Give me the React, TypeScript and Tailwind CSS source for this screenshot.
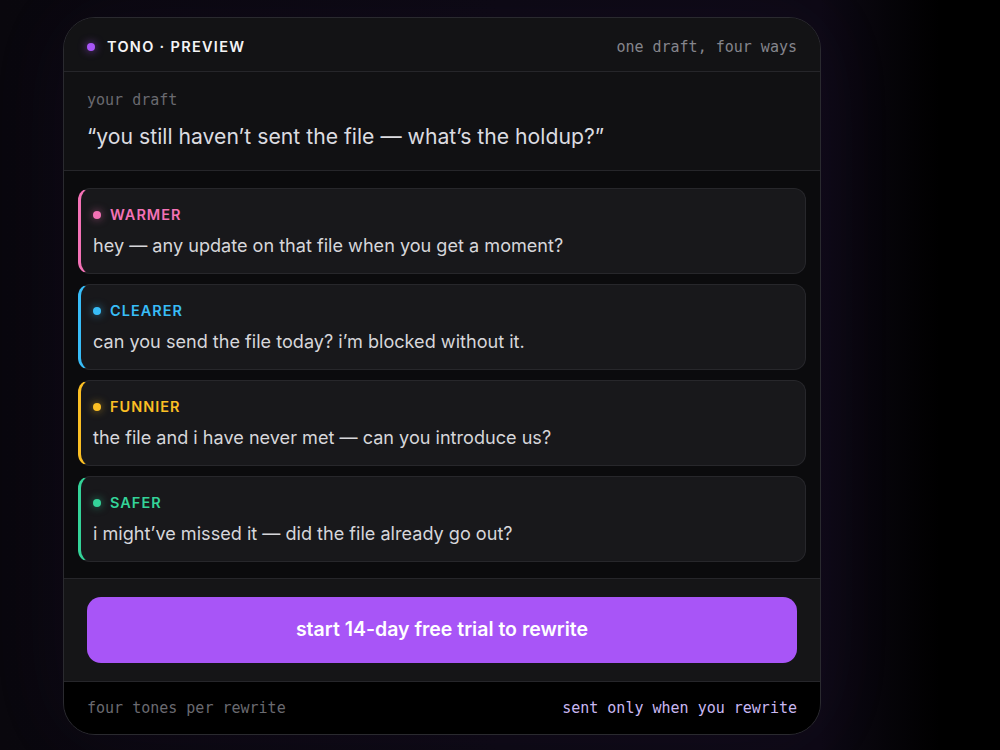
const tones = [
	{ name: 'WARMER', text: 'hey — any update on that file when you get a moment?', bar: 'border-l-[#f472b6]', label: 'text-[#f472b6]', dot: 'bg-[#f472b6] shadow-[0_0_8px_rgba(244,114,182,0.6)]' },
	{ name: 'CLEARER', text: 'can you send the file today? i’m blocked without it.', bar: 'border-l-[#38bdf8]', label: 'text-[#38bdf8]', dot: 'bg-[#38bdf8] shadow-[0_0_8px_rgba(56,189,248,0.6)]' },
	{ name: 'FUNNIER', text: 'the file and i have never met — can you introduce us?', bar: 'border-l-[#fbbf24]', label: 'text-[#fbbf24]', dot: 'bg-[#fbbf24] shadow-[0_0_8px_rgba(251,191,36,0.6)]' },
	{ name: 'SAFER', text: 'i might’ve missed it — did the file already go out?', bar: 'border-l-[#34d399]', label: 'text-[#34d399]', dot: 'bg-[#34d399] shadow-[0_0_8px_rgba(52,211,153,0.6)]' },
];

const mono = "font-['DejaVu_Sans_Mono','Liberation_Mono',monospace] text-[15px] leading-5";

const App = () => {
	return (
		<div className="min-h-screen w-full bg-[linear-gradient(90deg,#09070d_0%,#0c0912_50%,#0d0914_82%,#000_94%)] pl-[63px] pt-[17px] pb-4 font-['Inter','Noto_Sans',sans-serif]">
			<div className="w-[758px] overflow-hidden rounded-[32px] border border-[#2a2a2f] bg-[#111113] shadow-[0_0_90px_rgba(120,60,200,0.06)]">
				{/* header */}
				<div className="flex items-center justify-between border-b border-[#26262a] bg-[#131315] px-[23px] pt-[19px] pb-[14px]">
					<div className="flex items-center gap-3">
						<span className="h-2 w-2 rounded-full bg-[#a855f7] shadow-[0_0_8px_rgba(168,85,247,0.7)]" />
						<span className="text-[14.5px] leading-5 font-semibold tracking-[0.09em] text-[#f4f4f5]">TONO · PREVIEW</span>
					</div>
					<span className={`${mono} text-[#85858c]`}>one draft, four ways</span>
				</div>

				{/* draft */}
				<div className="border-b border-[#26262a] bg-[#111113] px-[23px] pt-[18px] pb-5">
					<p className={`${mono} text-[#6a6a70]`}>your draft</p>
					<p className="mt-3 h-7 text-[21.2px] leading-7 text-[#dcdce0]">“you still haven’t sent the file — what’s the holdup?”</p>
				</div>

				{/* rewrites */}
				<div className="flex flex-col gap-2.5 border-b border-[#26262a] bg-[#0b0b0d] px-3.5 pt-[17px] pb-4">
					{tones.map((t) => (
						<div key={t.name} className={`h-[86px] rounded-xl border border-[#27272b] border-l-[3px] ${t.bar} bg-[#18181b] pt-4 pl-3 pr-4`}>
							<div className="flex items-center gap-[9px]">
								<span className={`h-2 w-2 rounded-full ${t.dot}`} />
								<span className={`text-[14.5px] leading-5 font-semibold tracking-[0.07em] ${t.label}`}>{t.name}</span>
							</div>
							<p className="mt-1.5 h-7 text-[18.1px] leading-7 text-[#d6d6da]">{t.text}</p>
						</div>
					))}
				</div>

				{/* cta */}
				<div className="border-b border-[#26262a] bg-[#151517] px-[23px] py-[18px]">
					<button className="flex h-[66px] w-full items-center justify-center rounded-[14px] bg-[#a855f7] text-[19.5px] font-semibold text-white">
						start 14-day free trial to rewrite
					</button>
				</div>

				{/* footer */}
				<div className="flex items-center justify-between bg-black px-[23px] py-4">
					<span className={`${mono} text-[#6a6a70]`}>four tones per rewrite</span>
					<span className={`${mono} text-[#c9b8f2]`}>sent only when you rewrite</span>
				</div>
			</div>
		</div>
	);
};

export default App;
